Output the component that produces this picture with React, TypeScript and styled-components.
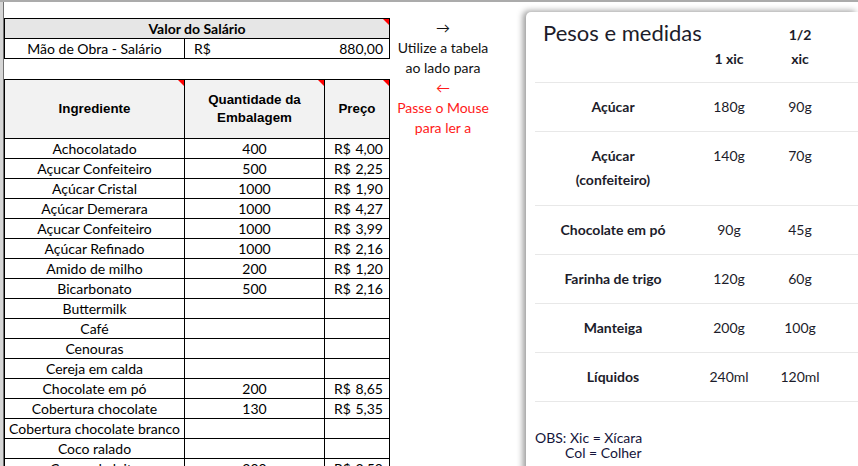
import styled, { createGlobalStyle } from "styled-components"

const GlobalStyle = createGlobalStyle`
    html, body {
        margin: 0;
        padding: 0;
        background: #ffffff;
        overflow: hidden;
    }
    body {
        font-family: Lato, "Liberation Sans", sans-serif;
    }
`

const INGREDIENTS = [
    { name: "Achocolatado", qty: "400", price: "4,00" },
    { name: "Açucar Confeiteiro", qty: "500", price: "2,25" },
    { name: "Açúcar Cristal", qty: "1000", price: "1,90" },
    { name: "Açúcar Demerara", qty: "1000", price: "4,27" },
    { name: "Açucar Confeiteiro", qty: "1000", price: "3,99" },
    { name: "Açúcar Refinado", qty: "1000", price: "2,16" },
    { name: "Amido de milho", qty: "200", price: "1,20" },
    { name: "Bicarbonato", qty: "500", price: "2,16" },
    { name: "Buttermilk", qty: "", price: "" },
    { name: "Café", qty: "", price: "" },
    { name: "Cenouras", qty: "", price: "" },
    { name: "Cereja em calda", qty: "", price: "" },
    { name: "Chocolate em pó", qty: "200", price: "8,65" },
    { name: "Cobertura chocolate", qty: "130", price: "5,35" },
    { name: "Cobertura chocolate branco", qty: "", price: "" },
    { name: "Coco ralado", qty: "", price: "" },
    { name: "Creme de leite", qty: "300", price: "3,50" },
]

const MEASURES = [
    { name: ["Açúcar"], full: "180g", half: "90g" },
    { name: ["Açúcar", "(confeiteiro)"], full: "140g", half: "70g" },
    { name: ["Chocolate em pó"], full: "90g", half: "45g" },
    { name: ["Farinha de trigo"], full: "120g", half: "60g" },
    { name: ["Manteiga"], full: "200g", half: "100g" },
    { name: ["Líquidos"], full: "240ml", half: "120ml" },
]

export default function App() {
    return (
        <>
            <GlobalStyle />
            <Page>
                <LeftEdge />
                <Sheet>
                    <Table>
                        <colgroup>
                            <col style={{ width: 180 }} />
                            <col style={{ width: 205 }} />
                        </colgroup>
                        <tbody>
                            <tr>
                                <TitleCell colSpan={2} $note>Valor do Salário</TitleCell>
                            </tr>
                            <tr>
                                <Cell>Mão de Obra - Salário</Cell>
                                <Cell>
                                    <Money>
                                        <span>R$</span>
                                        <span>880,00</span>
                                    </Money>
                                </Cell>
                            </tr>
                        </tbody>
                    </Table>

                    <Table>
                        <colgroup>
                            <col style={{ width: 180 }} />
                            <col style={{ width: 140 }} />
                            <col style={{ width: 65 }} />
                        </colgroup>
                        <thead>
                            <tr>
                                <HeadCell $note>Ingrediente</HeadCell>
                                <HeadCell $note>Quantidade da Embalagem</HeadCell>
                                <HeadCell $note>Preço</HeadCell>
                            </tr>
                        </thead>
                        <tbody>
                            {INGREDIENTS.map((item, i) => (
                                <tr key={i}>
                                    <Cell>{item.name}</Cell>
                                    <Cell>{item.qty}</Cell>
                                    <Cell>
                                        {item.price && (
                                            <Money>
                                                <span>R$</span>
                                                <span>{item.price}</span>
                                            </Money>
                                        )}
                                    </Cell>
                                </tr>
                            ))}
                        </tbody>
                    </Table>
                </Sheet>

                <Note>
                    <NoteLine>→</NoteLine>
                    <NoteLine>Utilize a tabela</NoteLine>
                    <NoteLine>ao lado para</NoteLine>
                    <NoteLine $red>←</NoteLine>
                    <NoteLine $red>Passe o Mouse</NoteLine>
                    <NoteLine $red>para ler a</NoteLine>
                </Note>

                <Panel>
                    <PanelHead>
                        <PanelTitle>Pesos e medidas</PanelTitle>
                        <ColHead>1 xic</ColHead>
                        <ColHead>
                            1/2
                            <br />
                            xic
                        </ColHead>
                    </PanelHead>
                    {MEASURES.map((m, i) => (
                        <MeasureRow key={i} $lines={m.name.length}>
                            <MeasureName>
                                {m.name.map((line, j) => (
                                    <div key={j}>{line}</div>
                                ))}
                            </MeasureName>
                            <MeasureValue>{m.full}</MeasureValue>
                            <MeasureValue>{m.half}</MeasureValue>
                        </MeasureRow>
                    ))}
                    <Obs>
                        <div>OBS: Xic = Xícara</div>
                        <ObsIndent>Col = Colher</ObsIndent>
                    </Obs>
                </Panel>
            </Page>
        </>
    )
}

const Page = styled.div`
    display: flex;
    align-items: flex-start;
    width: 858px;
    height: 464px;
    overflow: hidden;
    border-top: 2px solid #ababab;
    color: #000;
`

const LeftEdge = styled.div`
    flex: 0 0 3px;
    align-self: stretch;
    background: #d6d6d6;
    border-right: 1px solid #707070;
`

const Sheet = styled.div`
    flex: 0 0 386px;
    display: flex;
    flex-direction: column;
    gap: 20px;
    padding-top: 16px;
`

const Table = styled.table`
    border-collapse: collapse;
    table-layout: fixed;
    width: 386px;
    font-family: Lato, "Liberation Sans", sans-serif;
    font-size: 14px;
`

const Cell = styled.td`
    height: 19px;
    padding: 0;
    border: 1px solid #000;
    text-align: center;
    line-height: 19px;
    white-space: nowrap;
    overflow: hidden;
`

const cornerNote = `
    &::after {
        content: "";
        position: absolute;
        top: 0;
        right: 0;
        border-top: 6px solid #ff0000;
        border-left: 6px solid transparent;
    }
`

const TitleCell = styled.td<{ $note?: boolean }>`
    position: relative;
    height: 19px;
    padding: 0;
    border: 1px solid #000;
    background: #e6e6e6;
    text-align: center;
    font-weight: 700;
    line-height: 19px;
    ${(p) => (p.$note ? cornerNote : "")}
`

const HeadCell = styled.th<{ $note?: boolean }>`
    position: relative;
    height: 58px;
    padding: 0 6px;
    border: 1px solid #000;
    background: #f2f2f2;
    font-family: "Liberation Sans", Arial, sans-serif;
    font-size: 13.33px;
    font-weight: 700;
    line-height: 18px;
    ${(p) => (p.$note ? cornerNote : "")}
`

const Money = styled.div`
    display: flex;
    justify-content: space-between;
    padding: 0 6px 0 9px;
`

const Note = styled.div`
    flex: 0 0 106px;
    padding-top: 16px;
    text-align: center;
    font-family: Lato, "Liberation Sans", sans-serif;
    font-size: 14px;
`

const NoteLine = styled.div<{ $red?: boolean }>`
    height: 20px;
    line-height: 20px;
    color: ${(p) => (p.$red ? "#ff1a1a" : "#111")};
`

const Panel = styled.div`
    flex: 1;
    align-self: stretch;
    margin: 10px 0 -20px 30px;
    padding-left: 9px;
    background: #fff;
    border-radius: 5px 0 0 0;
    box-shadow: -3px -1px 6px rgba(0, 0, 0, 0.4);
    color: #1c1c2a;
    font-family: Lato, "Open Sans", sans-serif;
    font-size: 14px;
`

const grid = `
    display: grid;
    grid-template-columns: 156px 76px 66px 1fr;
    border-bottom: 1px solid #e8e8e8;
`

const PanelHead = styled.div`
    ${grid};
    height: 70px;
    align-items: end;
`

const PanelTitle = styled.div`
    align-self: start;
    padding: 7px 0 0 8px;
    font-size: 22px;
    line-height: 28px;
    white-space: nowrap;
`

const ColHead = styled.div`
    padding-bottom: 11px;
    font-weight: 700;
    line-height: 24px;
    text-align: center;
`

const MeasureRow = styled.div<{ $lines: number }>`
    ${grid};
    padding: 12px 0 ${(p) => (p.$lines > 1 ? "13px" : "12px")};
    line-height: 24px;
`

const MeasureName = styled.div`
    align-self: center;
    font-weight: 700;
    text-align: center;
`

const MeasureValue = styled.div`
    align-self: start;
    text-align: center;
`

const Obs = styled.div`
    margin-top: 28px;
    font-size: 14px;
    line-height: 15px;
    color: #14143a;
`

const ObsIndent = styled.div`
    padding-left: 30px;
`
